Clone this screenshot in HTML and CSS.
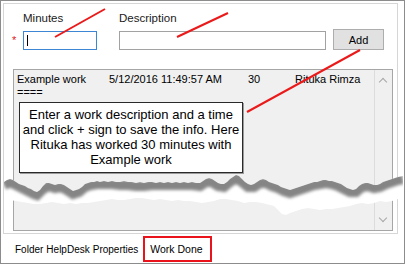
FILE: index.html
```html
<!DOCTYPE html>
<html lang="en">
<head>
    <meta charset="UTF-8">
    <meta name="viewport" content="width=device-width, initial-scale=1.0">
    <title>Work Done</title>
    <link rel="stylesheet" href="styles.css">
</head>
<body>
    <div class="frame">
        <div class="panel">
            <div class="entry">
                <span class="req">*</span>
                <div class="field minutes">
                    <label for="minutes">Minutes</label>
                    <div class="input focused" id="minutes"><span class="caret"></span></div>
                </div>
                <div class="field description">
                    <label for="description">Description</label>
                    <div class="input" id="description"></div>
                </div>
                <button class="add">Add</button>
            </div>

            <div class="listview">
                <div class="rows">
                    <div class="row">
                        <div class="col name">Example work<br>====</div>
                        <div class="col date">5/12/2016 11:49:57 AM</div>
                        <div class="col mins">30</div>
                        <div class="col user">Rituka Rimza</div>
                    </div>
                </div>
                <div class="scrollbar">
                    <span class="chev up"></span>
                    <span class="chev down"></span>
                </div>
            </div>
        </div>

        <div class="tabs">
            <span class="tab">Folder</span>
            <span class="tab">HelpDesk</span>
            <span class="tab">Properties</span>
            <span class="tab active">Work Done</span>
        </div>

        <!-- annotation callout -->
        <div class="callout">
            Enter a work description and a time<br>
            and click + sign to save the info. Here<br>
            Rituka has worked 30 minutes with<br>
            Example work
        </div>

        <!-- torn paper cut -->
        <svg class="torn" width="405" height="48" viewBox="0 0 405 48">
            <defs>
                <clipPath id="gap">
                    <path id="gapShape" d="M4,12 L7,10 L10,9 L13,10 L16,12 L19,14 L22,15 L25,16 L28,18 L31,19 L34,21 L37,22 L40,20 L43,16 L46,13 L49,13 L52,14 L55,15 L58,14 L61,14 L64,15 L67,17 L70,19 L73,21 L76,20 L79,19 L82,17 L85,14 L88,13 L91,12 L94,12 L97,11 L100,12 L104,11 L108,12 L112,11 L116,12 L120,12 L124,11 L128,12 L132,12 L136,13 L140,12 L144,13 L148,12 L152,12 L156,13 L160,12 L164,13 L168,12 L172,13 L176,12 L180,13 L184,12 L188,13 L192,12 L196,13 L200,13 L203,11 L206,9 L209,8 L212,9 L215,11 L218,13 L221,14 L224,14 L227,12 L230,9 L233,7 L236,5 L239,6 L242,9 L245,12 L248,14 L251,15 L254,14 L257,12 L260,10 L263,9 L266,10 L269,12 L272,13 L275,14 L278,15 L281,17 L284,18 L287,19 L290,20 L293,19 L296,18 L299,17 L302,16 L305,15 L308,14 L311,13 L314,12 L317,12 L320,11 L323,10 L326,10 L329,11 L332,11 L335,12 L338,13 L341,14 L344,16 L347,18 L350,19 L353,20 L356,19 L359,16 L362,14 L365,13 L368,13 L371,14 L374,15 L377,15 L380,14 L383,12 L386,11 L389,10 L392,9 L395,8 L398,7 L403,6 L403,27 L398,29 L392,31 L386,32 L380,31 L374,33 L368,34 L362,33 L356,34 L350,36 L344,37 L338,38 L332,39 L326,39 L320,40 L314,39 L308,38 L302,39 L296,41 L290,43 L286,45 L282,44 L278,40 L274,36 L270,35 L266,34 L262,33 L256,32 L250,32 L244,33 L238,31 L232,30 L226,29 L220,29 L214,31 L208,32 L202,33 L196,32 L190,31 L184,31 L178,30 L172,31 L166,30 L160,29 L154,30 L148,29 L142,28 L136,28 L130,29 L124,30 L118,30 L112,29 L106,30 L100,31 L94,32 L88,33 L82,33 L76,34 L70,33 L64,34 L58,33 L52,32 L46,33 L40,34 L34,34 L28,33 L22,32 L16,31 L10,30 L4,30 Z"/>
                </clipPath>
                <filter id="soft" x="-5%" y="-50%" width="110%" height="200%">
                    <feGaussianBlur stdDeviation="1.8"/>
                </filter>
            </defs>
            <use href="#gapShape" fill="#ffffff"/>
            <g clip-path="url(#gap)">
                <path filter="url(#soft)" fill="none" stroke="#858585" stroke-width="10"
                      d="M4,15 L10,12 L16,15 L22,18 L28,21 L34,24 L37,25 L43,19 L49,16 L55,18 L61,17 L67,20 L73,24 L79,22 L85,17 L91,15 L97,14 L104,14 L112,14 L120,15 L128,15 L136,16 L144,16 L152,15 L160,15 L168,15 L176,15 L184,15 L192,15 L200,16 L206,12 L212,12 L218,16 L224,17 L230,12 L236,8 L242,12 L248,17 L254,17 L260,13 L266,13 L272,16 L278,18 L284,21 L290,23 L296,21 L302,19 L308,17 L314,15 L320,14 L326,13 L332,14 L338,16 L344,19 L350,22 L356,22 L362,17 L368,16 L374,18 L380,17 L386,14 L392,12 L398,10 L403,9"/>
            </g>
        </svg>

        <!-- red pointer lines -->
        <svg class="pointers" width="405" height="264" viewBox="0 0 405 264">
            <line x1="105" y1="9" x2="55" y2="37"/>
            <line x1="228" y1="13" x2="177" y2="37"/>
            <line x1="360" y1="50" x2="247" y2="112"/>
        </svg>
    </div>
</body>
</html>
```

FILE: styles.css
```css
body {
    margin: 0;
    font-family: "Liberation Sans", Arial, sans-serif;
    font-size: 11px;
    color: #000;
}

.frame {
    position: relative;
    width: 405px;
    height: 264px;
    box-sizing: border-box;
    border: 1px solid #8c8c8c;
    background: #fff;
    overflow: hidden;
}

.panel {
    margin: 2px 6px 0 2px;
    height: 231px;
    box-sizing: border-box;
    border: 1px solid #d6d6d6;
    padding: 7px 0 0 8px;
}

/* entry row */
.entry {
    display: flex;
    align-items: flex-end;
}

.req {
    width: 11px;
    color: #e0201c;
    font-size: 11px;
    line-height: 11px;
    margin-bottom: 4px;
}

.field label {
    display: block;
    font-size: 11.5px;
    line-height: 15px;
    margin-bottom: 5px;
    color: #1a1a1a;
}

.input {
    height: 19px;
    box-sizing: border-box;
    border: 1px solid #a2a2a2;
    background: #fff;
    position: relative;
}

.input.focused {
    border-color: #3c86d3;
}

.caret {
    position: absolute;
    left: 3px;
    top: 3px;
    width: 1px;
    height: 11px;
    background: #000;
}

.minutes .input {
    width: 74px;
}

.description {
    margin-left: 22px;
}

.description .input {
    width: 207px;
}

.add {
    margin-left: 7px;
    width: 51px;
    height: 21px;
    padding: 0;
    border: 1px solid #adadad;
    background: #e1e1e1;
    font-family: inherit;
    font-size: 11px;
    color: #000;
}

/* list */
.listview {
    margin: 19px 0 0 1px;
    width: 380px;
    height: 162px;
    box-sizing: border-box;
    border: 1px solid #a6a6a6;
    background: #f0f0f0;
    display: flex;
}

.rows {
    flex: 1;
    padding: 3px 0 0 3px;
}

.row {
    display: flex;
    line-height: 13px;
}

.col.name {
    width: 92px;
}

.col.date {
    width: 139px;
}

.col.mins {
    width: 47px;
}

.scrollbar {
    width: 17px;
    border-left: 1px solid #dcdcdc;
    position: relative;
}

.chev {
    position: absolute;
    left: 5px;
    width: 5px;
    height: 5px;
    border-left: 1px solid #a8a8a8;
    border-top: 1px solid #a8a8a8;
}

.chev.up {
    top: 9px;
    transform: rotate(45deg);
}

.chev.down {
    bottom: 9px;
    transform: rotate(225deg);
}

/* tabs */
.tabs {
    display: flex;
    align-items: center;
    height: 30px;
    padding-left: 13px;
    font-size: 10px;
}

.tab {
    padding: 0 1px;
    margin-right: 1px;
}

.tab.active {
    margin-left: 3px;
    padding: 5px 7px 5px 5px;
    border: 2px solid #e8131b;
    font-size: 10.5px;
}

/* annotations */
.callout {
    position: absolute;
    left: 18px;
    top: 101px;
    width: 224px;
    height: 71px;
    box-sizing: border-box;
    border: 1px solid #2a2a2a;
    background: #fff;
    padding-top: 4px;
    text-align: center;
    font-size: 13px;
    line-height: 15px;
    box-shadow: 1px 1px 0 #9a9a9a;
}

.torn {
    position: absolute;
    left: -1px;
    top: 169px;
}

.pointers {
    position: absolute;
    left: -1px;
    top: -1px;
}

.pointers line {
    stroke: #ea1a1a;
    stroke-width: 2;
}
```
